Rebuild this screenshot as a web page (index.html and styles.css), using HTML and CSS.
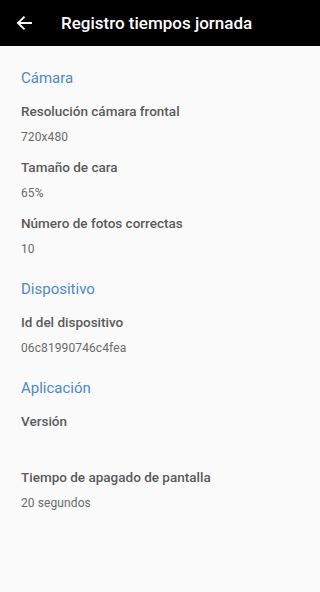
FILE: index.html
```html
<!DOCTYPE html>
<html lang="es">
<head>
<meta charset="utf-8">
<link rel="stylesheet" href="styles.css">
</head>
<body>
<header class="appbar">
  <svg class="back" width="16" height="16" viewBox="0 0 16 16" aria-hidden="true">
    <path d="M15 8H2.2M7.8 2.3L2 8l5.8 5.7" fill="none" stroke="#fff" stroke-width="1.9" stroke-linecap="square"/>
  </svg>
  <h1 class="title">Registro tiempos jornada</h1>
</header>
<main class="content">
  <section class="group">
    <h2 class="group-title">Cámara</h2>
    <div class="item"><div class="label">Resolución cámara frontal</div><div class="value">720x480</div></div>
    <div class="item"><div class="label">Tamaño de cara</div><div class="value">65%</div></div>
    <div class="item"><div class="label">Número de fotos correctas</div><div class="value">10</div></div>
  </section>
  <section class="group">
    <h2 class="group-title">Dispositivo</h2>
    <div class="item"><div class="label">Id del dispositivo</div><div class="value">06c81990746c4fea</div></div>
  </section>
  <section class="group">
    <h2 class="group-title">Aplicación</h2>
    <div class="item"><div class="label">Versión</div><div class="value"></div></div>
    <div class="item"><div class="label">Tiempo de apagado de pantalla</div><div class="value">20 segundos</div></div>
  </section>
</main>
</body>
</html>
```
FILE: styles.css
```css
html, body {
  margin: 0;
  padding: 0;
  background: #fafafa;
  font-family: Roboto, "Noto Sans", sans-serif;
}
.appbar {
  height: 46px;
  background: #000;
  display: flex;
  align-items: center;
  padding-left: 16px;
  box-sizing: border-box;
}
.back {
  display: block;
}
.title {
  margin: 0 0 0 29px;
  color: #fff;
  font-size: 17px;
  font-weight: 500;
  line-height: 24px;
}
.content {
  padding: 22px 21px 0;
}
.group + .group {
  margin-top: 10px;
}
.group-title {
  margin: 0 0 13px;
  font-size: 15px;
  font-weight: 400;
  line-height: 20px;
  color: #4a8ac4;
}
.item {
  padding-bottom: 10px;
}
.label {
  font-size: 13.5px;
  font-weight: 500;
  line-height: 20px;
  color: #5a5a5a;
}
.value {
  margin-top: 6px;
  height: 20px;
  font-size: 12px;
  line-height: 20px;
  color: #6a6a6a;
  letter-spacing: 0.1px;
}
```
